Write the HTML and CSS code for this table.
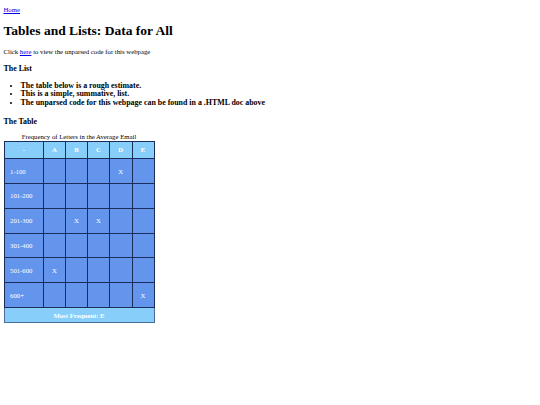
FILE: index.html
```html
<!DOCTYPE html>
<html>
<head>
<meta charset="utf-8">
<title>Tables and Lists</title>
<link rel="stylesheet" href="styles.css">
</head>
<body class="page">
<p class="nav"><a href="#">Home</a></p>
<h1 class="title">Tables and Lists: Data for All</h1>
<p class="intro">Click <a href="#">here</a> to view the unparsed code for this webpage</p>
<h3 class="section list-head">The List</h3>
<ul class="list">
<li>The table below is a rough estimate.</li>
<li>This is a simple, summative, list.</li>
<li>The unparsed code for this webpage can be found in a .HTML doc above</li>
</ul>
<h3 class="section table-head">The Table</h3>
<table class="freq">
<caption class="cap">Frequency of Letters in the Average Email</caption>
<thead>
<tr><th class="first">-</th><th>A</th><th>B</th><th>C</th><th class="d">D</th><th>E</th></tr>
</thead>
<tbody>
<tr><td class="label">1-100</td><td></td><td></td><td></td><td>X</td><td></td></tr>
<tr><td class="label">101-200</td><td></td><td></td><td></td><td></td><td></td></tr>
<tr><td class="label">201-300</td><td></td><td>X</td><td>X</td><td></td><td></td></tr>
<tr><td class="label">301-400</td><td></td><td></td><td></td><td></td><td></td></tr>
<tr><td class="label">501-600</td><td>X</td><td></td><td></td><td></td><td></td></tr>
<tr><td class="label">600+</td><td></td><td></td><td></td><td></td><td>X</td></tr>
</tbody>
<tfoot>
<tr><th colspan="6" class="foot">Most Frequent: E</th></tr>
</tfoot>
</table>
</body>
</html>
```
FILE: styles.css
```css
html {
  background: #fff;
}
.page {
  margin: 0;
  padding: 0 0 0 3.5px;
  font-family: "Liberation Serif", "Times New Roman", serif;
  font-size: 6.75px;
  color: #000;
}
.page a {
  color: #0000ee;
}
.nav {
  margin: 6px 0 0;
  line-height: 8px;
}
.title {
  margin: 9px 0 0;
  font-size: 13.5px;
  line-height: 16px;
}
.intro {
  margin: 9px 0 0;
  line-height: 8px;
}
.section {
  font-size: 7.9px;
  line-height: 9px;
}
.list-head {
  margin: 7.5px 0 0;
}
.table-head {
  margin: 10px 0 0;
}
.list {
  margin: 9px 0 0;
  padding-left: 17px;
  font-size: 7.9px;
  font-weight: bold;
  line-height: 8.5px;
}
.freq {
  margin-top: 6.5px;
  border-collapse: collapse;
  border: 1px solid #4e6d96;
  color: #fff;
  table-layout: fixed;
  width: 150px;
}
.cap {
  color: #000;
  line-height: 8px;
}
.freq th {
  background: #87cefa;
  height: 16.7px;
  padding: 0;
  font-weight: bold;
  border: 1px solid #1b2d5a;
  width: 21px;
}
.freq th.first {
  width: 38.5px;
}
.freq th.d {
  width: 21.5px;
}
.freq td {
  background: #6495ed;
  height: 23.8px;
  padding: 0;
  border: 1px solid #1b2d5a;
  text-align: center;
}
.freq td.label {
  text-align: left;
  padding-left: 5.5px;
}
.freq th.foot {
  height: 14.5px;
  border: 1px solid #4e6d96;
}
```
